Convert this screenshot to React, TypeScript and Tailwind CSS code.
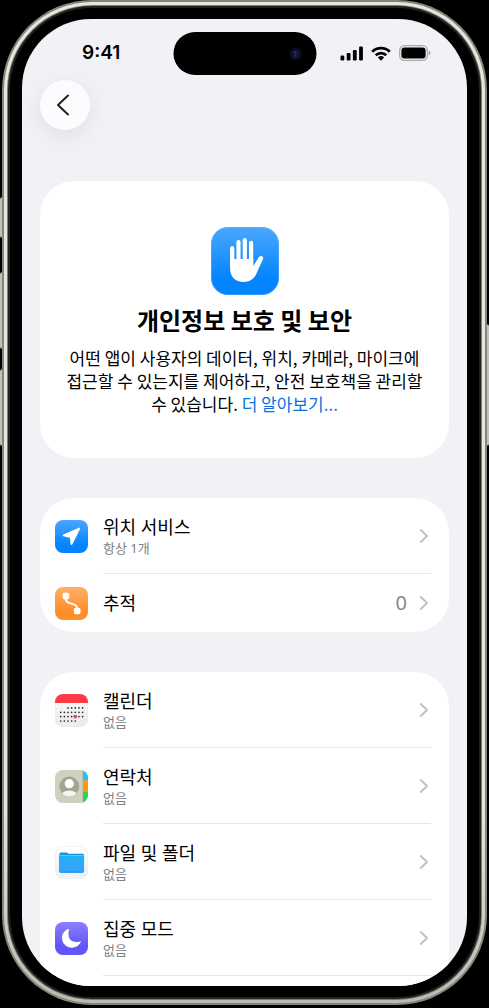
import type { ReactNode } from 'react';

interface RowProps {
  icon: ReactNode;
  title: string;
  detail?: string;
  value?: string;
  last?: boolean;
}

function TileGradient({ id, from, to }: { id: string; from: string; to: string }) {
  return (
    <defs>
      <linearGradient id={id} x1="0" y1="0" x2="0" y2="1">
        <stop offset="0" stopColor={from} />
        <stop offset="0.75" stopColor={to} />
      </linearGradient>
    </defs>
  );
}

function HandIcon() {
  return (
    <svg viewBox="0 0 68 68" className="size-[68px]" aria-hidden="true">
      <TileGradient id="hand-bg" from="#4ba7fe" to="#0485fe" />
      <rect width="68" height="68" rx="17" fill="url(#hand-bg)" />
      <rect x="0.5" y="0.5" width="67" height="67" rx="16.5" fill="none" stroke="#7cc4ff" strokeOpacity="0.35" />
      <g stroke="#fff" strokeWidth="4.2" strokeLinecap="round">
        <path d="M21.2 21.2V38" />
        <path d="M27.5 15.2V38" />
        <path d="M33.8 13.2V38" />
        <path d="M40.1 15.8V38" />
      </g>
      <path
        d="M19.1 32v9.500c0 8.500 5.400 13.500 13.400 13.500 6.400 0 10.800-3 13.200-9l6.300-14c1.100-2.800-2.400-4.200-4-2L42.200 39v-7z"
        fill="#fff"
      />
    </svg>
  );
}

function LocationIcon() {
  return (
    <svg viewBox="0 0 33 33" className="size-[33px]" aria-hidden="true">
      <TileGradient id="location-bg" from="#4ba7fe" to="#0485fe" />
      <rect width="33" height="33" rx="8" fill="url(#location-bg)" />
      <path
        d="M24.200 8.500 8.600 15.300l7.200 1.900.7 7z"
        fill="#fff"
        stroke="#fff"
        strokeWidth="1.800"
        strokeLinejoin="round"
      />
    </svg>
  );
}

function TrackingIcon() {
  return (
    <svg viewBox="0 0 33 33" className="size-[33px]" aria-hidden="true">
      <TileGradient id="tracking-bg" from="#ffb067" to="#ff8d28" />
      <rect width="33" height="33" rx="8" fill="url(#tracking-bg)" />
      <path
        d="M11 9v3.200c0 2.800 1.600 3.500 4.600 4.200 4.200 1 6.600 2 6.600 5V24"
        fill="none"
        stroke="#fff"
        strokeWidth="1.900"
      />
      <rect x="7.600" y="5.800" width="6.600" height="6.600" rx="1.800" fill="#fff" />
      <rect x="18.900" y="20.700" width="6.600" height="6.600" rx="1.800" fill="#fff" />
    </svg>
  );
}

const CALENDAR_ROWS = [
  { y: 13.9, cols: [2, 3, 4, 5, 6] },
  { y: 18.3, cols: [0, 1, 2, 3, 4, 5, 6] },
  { y: 22.6, cols: [0, 1, 2, 3, 5, 6] },
  { y: 27, cols: [0, 1, 2, 3, 4] },
];

function CalendarIcon() {
  return (
    <svg viewBox="0 0 33 33" className="size-[33px]" aria-hidden="true">
      <TileGradient id="calendar-bg" from="#ffffff" to="#ededee" />
      <rect x="0.3" y="0.3" width="32.4" height="32.4" rx="8" fill="url(#calendar-bg)" stroke="#e2e2e4" strokeWidth="0.6" />
      <path d="M0 9V8a8 8 0 0 1 8-8h17a8 8 0 0 1 8 8v1z" fill="#fb3c47" />
      {CALENDAR_ROWS.map((row) =>
        row.cols.map((col) => (
          <circle key={`${row.y}-${col}`} cx={5.7 + col * 3.65} cy={row.y} r="0.85" fill="#2a2a2c" />
        ))
      )}
      <circle cx="20.3" cy="22.6" r="1.9" fill="#f0444c" />
    </svg>
  );
}

function ContactsIcon() {
  return (
    <svg viewBox="0 0 33 33" className="size-[33px]" aria-hidden="true">
      <defs>
        <clipPath id="contacts-tile">
          <rect width="33" height="33" rx="8" />
        </clipPath>
        <clipPath id="contacts-face">
          <circle cx="14.3" cy="16.5" r="10" />
        </clipPath>
      </defs>
      <g clipPath="url(#contacts-tile)">
        <rect width="33" height="33" fill="#cfd1be" />
        <rect x="28" width="5" height="10.5" fill="#20c2f5" />
        <rect x="28" y="10.5" width="5" height="11.5" fill="#ff9a0a" />
        <rect x="28" y="22" width="5" height="11" fill="#23d366" />
        <rect x="27.3" width="0.8" height="33" fill="#b9bba8" />
      </g>
      <circle cx="14.3" cy="16.5" r="10" fill="#a3a492" />
      <g clipPath="url(#contacts-face)">
        <circle cx="14.3" cy="13.7" r="4.6" fill="#fff" />
        <ellipse cx="14.3" cy="26" rx="8.2" ry="5.6" fill="#f6f6f0" />
      </g>
    </svg>
  );
}

function FolderIcon() {
  return (
    <svg viewBox="0 0 33 33" className="size-[33px]" aria-hidden="true">
      <TileGradient id="folder-bg" from="#ffffff" to="#f1f1f3" />
      <TileGradient id="folder-front" from="#1fb2f8" to="#36a4f8" />
      <rect x="0.3" y="0.3" width="32.4" height="32.4" rx="8" fill="url(#folder-bg)" stroke="#e8e8ea" strokeWidth="0.6" />
      <path d="M4.4 8.2c0-1 .6-1.600 1.600-1.600h5.200c.9 0 1.200.3 1.700.8l.4.4h14c1.100 0 1.700.6 1.700 1.700V13H4.400z" fill="#1596e2" />
      <path d="M4 10.500c0-1 .7-1.500 1.600-1.500h21.900c1 0 1.600.6 1.600 1.500V25c0 1.300-.8 2-2 2H6.200C5 27 4 26.300 4 25z" fill="url(#folder-front)" />
      <path d="M5 9.500h23.200" stroke="#7bd5ff" strokeWidth="0.6" />
      <path d="M4.500 25.800h24" stroke="#2a90e6" strokeWidth="0.8" />
    </svg>
  );
}

function MoonIcon() {
  return (
    <svg viewBox="0 0 33 33" className="size-[33px]" aria-hidden="true">
      <TileGradient id="moon-bg" from="#8b80fb" to="#6155f5" />
      <rect width="33" height="33" rx="8" fill="url(#moon-bg)" />
      <path
        d="M13.200 7c-3.700 1.400-6.200 5-6.200 9 0 5.400 4.300 9.700 9.800 9.700 4 0 7.400-2.200 9-5.700.200-.5-.2-.8-.7-.6-1.200.5-2.300.7-3.700.7-5 0-8-3-8-8 0-1.700.3-3 .7-4.400.100-.5-.4-.9-.9-.7z"
        fill="#fff"
      />
    </svg>
  );
}

function Chevron() {
  return (
    <svg viewBox="0 0 10 16" className="h-4 w-2.5 shrink-0" aria-hidden="true">
      <path d="M1.800 2 8 8l-6.200 6" fill="none" stroke="#c1c1c4" strokeWidth="1.900" strokeLinecap="round" strokeLinejoin="round" />
    </svg>
  );
}

function Row({ icon, title, detail, value, last }: RowProps) {
  return (
    <li>
      <a
        href="#"
        className={`flex items-stretch gap-[15px] pl-[15px] pr-[18px] font-['Noto_Sans','Noto_Sans_CJK_KR',sans-serif] ${detail ? 'h-[76px]' : 'h-[58px]'}`}
      >
        <span className="flex items-center">{icon}</span>
        <span className={`flex flex-1 items-center pr-0.5 ${last ? '' : 'border-b border-[#e6e6e8]'}`}>
          <span className="flex flex-1 flex-col">
            <span className="text-[18px] leading-6 text-black">{title}</span>
            {detail && <span className="text-[13px] leading-[18px] text-[#808083]">{detail}</span>}
          </span>
          {value && <span className="mr-3 text-[20px] leading-6 text-[#88888b]">{value}</span>}
          <Chevron />
        </span>
      </a>
    </li>
  );
}

function Group({ children }: { children: ReactNode }) {
  return <ul className="mt-10 overflow-hidden rounded-[34px] bg-white">{children}</ul>;
}

function StatusBar() {
  return (
    <div className="relative flex h-[61px] shrink-0 items-start justify-between pl-[60px] pr-9 pt-[19px]">
      <span className="font-['Inter'] text-[19px] font-semibold leading-[30px] text-black">9:41</span>
      <span className="absolute left-1/2 top-[13px] flex h-[43px] w-[143px] -translate-x-1/2 items-center justify-end rounded-full bg-black pr-3.5">
        <svg viewBox="0 0 14 14" className="size-3.5" aria-hidden="true">
          <circle cx="7" cy="7" r="6.500" fill="#0b0a1c" />
          <circle cx="7" cy="7" r="4" fill="#12133c" />
          <circle cx="7" cy="5.300" r="1.100" fill="#2f3b8c" />
          <circle cx="7" cy="8.700" r="1.100" fill="#27327a" />
        </svg>
      </span>
      <span className="flex h-[30px] items-center gap-2">
        <svg viewBox="0 0 23 15" className="h-[15px] w-[23px]" aria-hidden="true">
          <rect x="0.500" y="9.500" width="3.800" height="5" rx="1.200" />
          <rect x="6.700" y="7" width="3.800" height="7.500" rx="1.200" />
          <rect x="12.900" y="4" width="3.800" height="10.500" rx="1.200" />
          <rect x="19.100" y="0.500" width="3.800" height="14" rx="1.200" />
        </svg>
        <svg viewBox="0 0 20 15" className="h-[15px] w-5" aria-hidden="true">
          <g fill="none" stroke="#000" strokeWidth="2.700">
            <path d="M1.200 5.700a12.600 12.600 0 0 1 17.600 0" />
            <path d="M4.700 9.300a7.600 7.600 0 0 1 10.600 0" />
          </g>
          <path d="M10 14.700 6.900 11.500a4.500 4.500 0 0 1 6.200 0z" />
        </svg>
        <svg viewBox="0 0 32 16" className="h-4 w-8" aria-hidden="true">
          <rect x="0.700" y="0.700" width="27.600" height="14.600" rx="4.600" fill="none" stroke="#a9a9ac" strokeWidth="1.200" />
          <rect x="2.400" y="2.400" width="24.200" height="11.200" rx="3" />
          <path d="M29.600 5.500c1.300.5 1.900 1.400 1.900 2.500s-.6 2-1.900 2.500z" fill="#a9a9ac" />
        </svg>
      </span>
    </div>
  );
}

const SIDE_BUTTONS = [
  'left-0 top-[197px] h-[41px]',
  'left-0 top-[272px] h-[77px]',
  'left-0 top-[369px] h-[77px]',
  'right-0 top-[324px] h-[122px]',
];

export default function App() {
  return (
    <div className="relative h-screen bg-black px-0.5 pb-[3px] font-['Noto_Sans_CJK_KR',sans-serif]">
      {SIDE_BUTTONS.map((place) => (
        <span key={place} className={`absolute w-1 rounded-sm border-y border-[#6c6b66] bg-[#c2c1ba] ${place}`} />
      ))}

      {/* metal band, then black bezel, then the display */}
      <div className="relative h-full rounded-[90px] bg-[#85847d] p-0.5">
        <div className="h-full rounded-[88px] bg-linear-to-b from-[#e6e6de] from-80% to-[#bdbab3] p-[3px]">
          <div className="h-full rounded-[85px] bg-[#7d7c76] p-px">
            <div className="h-full rounded-[84px] border-2 border-[#22221f] bg-black px-3 py-[11px]">
              <main className="flex h-full flex-col overflow-hidden rounded-[69px] bg-[#f1f1f6]">
                <StatusBar />

                <div className="px-[18px]">
                  <button
                    type="button"
                    aria-label="뒤로"
                    className="flex size-[50px] items-center justify-center rounded-full bg-[#fcfcff] shadow-[0_6px_24px_rgba(0,0,0,0.08)]"
                  >
                    <svg viewBox="0 0 14 22" className="mr-1 h-[22px] w-3.5" aria-hidden="true">
                      <path d="M12 1.500 2 11l10 9.500" fill="none" stroke="#1a1a1c" strokeWidth="1.900" strokeLinecap="round" strokeLinejoin="round" />
                    </svg>
                  </button>

                  <section className="mt-[51px] flex flex-col items-center rounded-[34px] bg-white px-6 pb-[43px] pt-[46px] text-center">
                    <HandIcon />
                    <h1 className="mt-[7px] text-[24px] font-bold leading-9 text-black">개인정보 보호 및 보안</h1>
                    <p className="mt-2 break-keep text-[17px] leading-[23px] text-black">
                      어떤 앱이 사용자의 데이터, 위치, 카메라, 마이크에 접근할 수 있는지를 제어하고, 안전 보호책을 관리할 수 있습니다.{' '}
                      <a href="#" className="text-[#0a72e0]">더 알아보기...</a>
                    </p>
                  </section>

                  <Group>
                    <Row icon={<LocationIcon />} title="위치 서비스" detail="항상 1개" />
                    <Row icon={<TrackingIcon />} title="추적" value="0" last />
                  </Group>

                  <Group>
                    <Row icon={<CalendarIcon />} title="캘린더" detail="없음" />
                    <Row icon={<ContactsIcon />} title="연락처" detail="없음" />
                    <Row icon={<FolderIcon />} title="파일 및 폴더" detail="없음" />
                    <Row icon={<MoonIcon />} title="집중 모드" detail="없음" />
                    <li className="h-10" />
                  </Group>
                </div>
              </main>
            </div>
          </div>
        </div>
      </div>
    </div>
  );
}
